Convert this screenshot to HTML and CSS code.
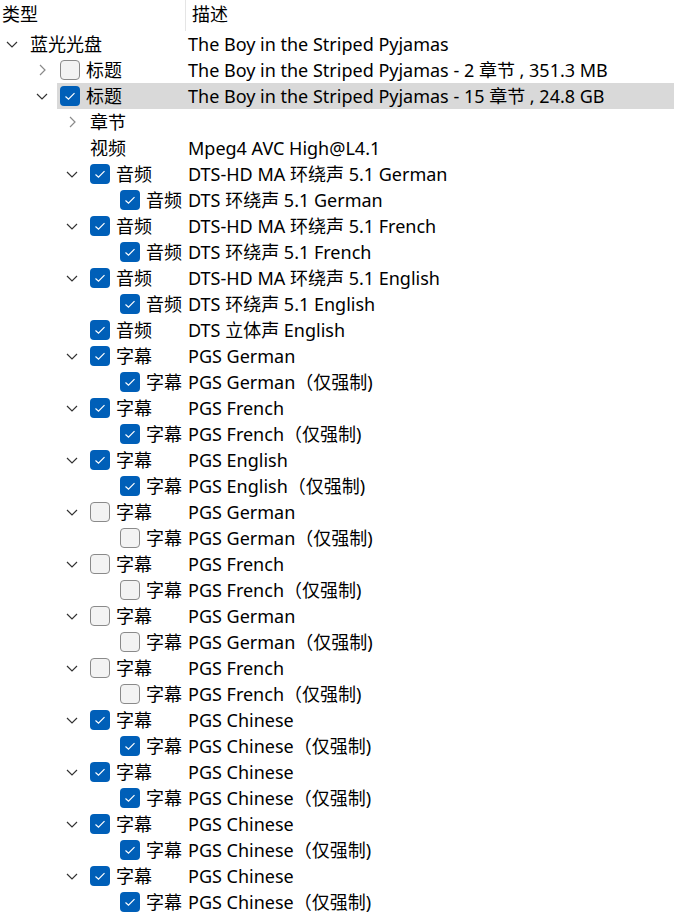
FILE: index.html
```html
<!DOCTYPE html>
<html lang="zh-CN">
<head>
    <meta charset="UTF-8">
    <meta name="viewport" content="width=device-width, initial-scale=1.0">
    <title>Disc Tree</title>
    <link rel="stylesheet" href="styles.css">
</head>
<body>
    <div class="tree">
        <!-- Column header -->
        <div class="tree-header">
            <div class="col-type">类型</div>
            <div class="col-desc">描述</div>
        </div>

        <div class="tree-body" id="tree-body"></div>
    </div>

    <script>
document.addEventListener("DOMContentLoaded", () => {
    const body = document.getElementById("tree-body");

    // level, twisty (open / closed / none), checkbox (on / off / none), name, description, selected
    const rows = [
        [0, "open", "none", "蓝光光盘", "The Boy in the Striped Pyjamas"],
        [1, "closed", "off", "标题", "The Boy in the Striped Pyjamas - 2 章节 , 351.3 MB"],
        [1, "open", "on", "标题", "The Boy in the Striped Pyjamas - 15 章节 , 24.8 GB", true],
        [2, "closed", "none", "章节", ""],
        [2, "none", "none", "视频", "Mpeg4 AVC High@L4.1"],
        [2, "open", "on", "音频", "DTS-HD MA 环绕声 5.1 German"],
        [3, "none", "on", "音频", "DTS 环绕声 5.1 German"],
        [2, "open", "on", "音频", "DTS-HD MA 环绕声 5.1 French"],
        [3, "none", "on", "音频", "DTS 环绕声 5.1 French"],
        [2, "open", "on", "音频", "DTS-HD MA 环绕声 5.1 English"],
        [3, "none", "on", "音频", "DTS 环绕声 5.1 English"],
        [2, "none", "on", "音频", "DTS 立体声 English"]
    ];

    const subs = [
        ["German", "on"], ["French", "on"], ["English", "on"],
        ["German", "off"], ["French", "off"], ["German", "off"], ["French", "off"],
        ["Chinese", "on"], ["Chinese", "on"], ["Chinese", "on"], ["Chinese", "on"]
    ];
    subs.forEach(([lang, state]) => {
        rows.push([2, "open", state, "字幕", `PGS ${lang}`]);
        rows.push([3, "none", state, "字幕", `PGS ${lang}（仅强制)`]);
    });

    const downIcon = '<svg width="12" height="7" viewBox="0 0 12 7"><polyline points="1,1 6,6 11,1" fill="none" stroke="#333" stroke-width="1.2"/></svg>';
    const rightIcon = '<svg width="7" height="12" viewBox="0 0 7 12"><polyline points="1,1 6,6 1,11" fill="none" stroke="#8a8a8a" stroke-width="1.2"/></svg>';
    const checkIcon = '<svg width="20" height="20" viewBox="0 0 20 20"><polyline points="5.5,10.5 8.5,13.2 14.5,7.2" fill="none" stroke="#fff" stroke-width="1.2"/></svg>';

    rows.forEach(([level, twisty, check, name, desc, selected]) => {
        const row = document.createElement("div");
        row.classList.add("row", `lv${level}`);
        if (selected) row.classList.add("selected");

        let twistyHtml = "";
        if (twisty === "open") twistyHtml = downIcon;
        if (twisty === "closed") twistyHtml = rightIcon;

        let checkHtml = "";
        if (check === "on") checkHtml = `<span class="check on">${checkIcon}</span>`;
        if (check === "off") checkHtml = '<span class="check"></span>';

        row.innerHTML = `
            <div class="name">
                <span class="twisty">${twistyHtml}</span>
                <span class="item">${checkHtml}<span class="label">${name}</span></span>
            </div>
            <div class="desc">${desc}</div>`;
        body.appendChild(row);
    });
});
    </script>
</body>
</html>
```

FILE: styles.css
```css
body {
    margin: 0;
    padding: 0;
    background: #fff;
    color: #000;
    font-family: "Noto Sans", "Noto Sans CJK SC", sans-serif;
    font-size: 18px;
}

.tree {
    width: 674px;
}

.tree-header {
    display: flex;
    height: 31px;
}

.col-type {
    width: 183px;
    padding-left: 2px;
    line-height: 28px;
    border-right: 1px solid #e5e5e5;
    box-sizing: content-box;
}

.col-desc {
    padding-left: 6px;
    line-height: 28px;
}

.row {
    display: flex;
    height: 26px;
    line-height: 27px;
    white-space: nowrap;
}

.name {
    display: flex;
    width: 188px;
    flex: none;
    box-sizing: border-box;
}

.row.lv1 .name { padding-left: 30px; }
.row.lv2 .name { padding-left: 60px; }
.row.lv3 .name { padding-left: 90px; }

.twisty {
    width: 24px;
    margin-right: 3px;
    flex: none;
    display: flex;
    align-items: center;
    justify-content: center;
}

.item {
    flex: 1;
    display: flex;
    align-items: center;
    padding-left: 3px;
}

.check {
    width: 20px;
    height: 20px;
    margin-right: 6px;
    box-sizing: border-box;
    border: 1px solid #8a8a8a;
    border-radius: 4px;
    background: #f3f3f3;
    flex: none;
}

.check.on {
    border: none;
    background: #005fb8;
}

.check svg {
    display: block;
}

.desc {
    flex: 1;
}

.row.selected .item,
.row.selected .desc {
    background: #d9d9d9;
}
```
